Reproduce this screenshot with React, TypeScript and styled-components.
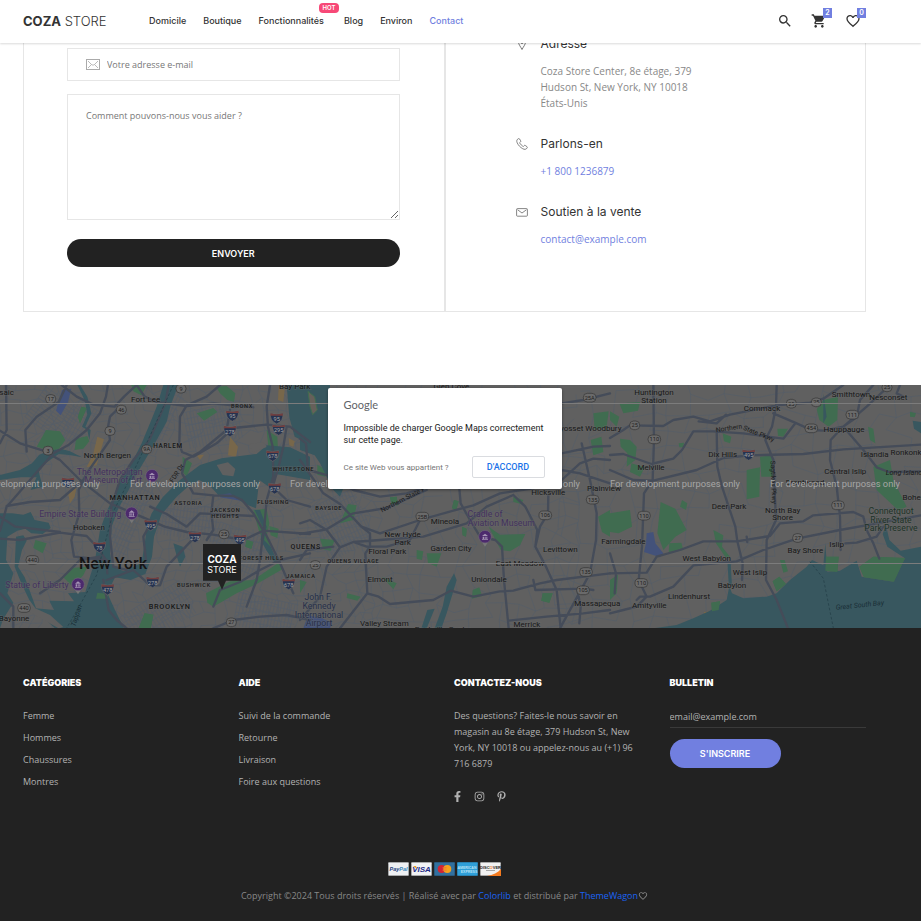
import React from "react";
import styled, { createGlobalStyle, css } from "styled-components";
import { MdFavoriteBorder, MdSearch, MdShoppingCart } from "react-icons/md";
import { FaFacebookF, FaInstagram, FaPinterestP } from "react-icons/fa";

const accent = "#717fe0";
const body = `"Open Sans", sans-serif`;
const display = `Inter, "Open Sans", sans-serif`;

const GlobalStyle = createGlobalStyle`
  *, *::before, *::after { box-sizing: border-box; }
  body { margin: 0; background: #fff; font-family: ${body}; font-size: 9px; color: #333; }
  a { color: inherit; text-decoration: none; }
  button, input, textarea { font-family: inherit; font-size: inherit; }
  h4, p, ul { margin: 0; padding: 0; }
  ul { list-style: none; }
`;

const gutter = css`padding-left: 23px; padding-right: 55px;`;

/* ---------- header ---------- */

const Header = styled.header`
  ${gutter}
  position: sticky;
  top: 0;
  z-index: 5;
  display: flex;
  align-items: center;
  justify-content: space-between;
  height: 43px;
  padding-bottom: 2px;
  background: #fff;
  box-shadow: 0 1px 2px rgba(0, 0, 0, 0.15);
`;

const Brand = styled.div`
  display: flex;
  align-items: center;
`;

const Logo = styled.a`
  width: 126px;
  font-family: ${display};
  font-size: 13px;
  line-height: 20px;
  font-weight: 300;
  white-space: nowrap;
  b { font-weight: 700; }
`;

const NavList = styled.ul`
  display: flex;
  gap: 17px;
`;

const NavLink = styled.a<{ $active?: boolean }>`
  position: relative;
  display: block;
  font-family: ${display};
  line-height: 16px;
  font-weight: 500;
  color: ${(p) => (p.$active ? accent : "#333")};
`;

const WideNavLink = styled(NavLink)`
  padding-right: 3px;
`;

const HotTag = styled.span`
  position: absolute;
  right: -12px;
  top: -10px;
  width: 20px;
  border-radius: 4px;
  background: #f74877;
  color: #fff;
  font-size: 6px;
  line-height: 10px;
  font-weight: 600;
  text-align: center;
`;

const Tools = styled.div`
  display: flex;
  gap: 18px;
  margin-right: 5px;
`;

const ToolButton = styled.button`
  position: relative;
  display: flex;
  padding: 0;
  border: 0;
  background: none;
  color: #333;
`;

const Count = styled.span`
  position: absolute;
  right: -5px;
  top: -5px;
  width: 9px;
  background: ${accent};
  color: #fff;
  font-family: ${display};
  font-size: 7px;
  line-height: 10px;
  font-weight: 600;
  text-align: center;
`;

/* ---------- contact ---------- */

const Contact = styled.section`
  ${gutter}
  display: grid;
  grid-template-columns: 1fr 1fr;
  margin-top: -10px;
  margin-bottom: 73px;
`;

const FormPanel = styled.form`
  display: flex;
  flex-direction: column;
  padding: 14px 44px 44px 43px;
  border: 1px solid #e6e6e6;
`;

const InfoPanel = styled.address`
  display: flex;
  flex-direction: column;
  gap: 23px;
  padding: 0 60px 44px 70px;
  border: 1px solid #e6e6e6;
  font-style: normal;
`;

const Field = styled.label`
  display: flex;
  align-items: center;
  gap: 7px;
  height: 33px;
  margin-bottom: 13px;
  padding: 0 18px;
  border: 1px solid #e6e6e6;
`;

const FieldInput = styled.input`
  flex: 1;
  min-width: 0;
  padding: 0;
  border: 0;
  outline: 0;
  background: none;
  color: #555;
  &::placeholder { color: #777; opacity: 1; }
`;

const Message = styled.textarea`
  height: 126px;
  margin-bottom: 19px;
  padding: 13px 18px;
  border: 1px solid #e6e6e6;
  outline: 0;
  line-height: 16px;
  resize: both;
  &::placeholder { color: #777; opacity: 1; }
`;

const Pill = styled.button<{ $tone: "dark" | "accent" }>`
  height: ${(p) => (p.$tone === "dark" ? "28px" : "29px")};
  width: ${(p) => (p.$tone === "dark" ? "100%" : "111px")};
  padding: 0;
  border: 0;
  border-radius: 15px;
  background: ${(p) => (p.$tone === "dark" ? "#222" : accent)};
  color: #fff;
  font-family: ${display};
  font-weight: 600;
`;

const InfoItem = styled.div`
  display: grid;
  grid-template-columns: 12px 1fr;
  column-gap: 13px;
  row-gap: 9px;
  align-items: center;
`;

const InfoTitle = styled.span`
  font-family: ${display};
  font-size: 12px;
  line-height: 20px;
`;

const InfoText = styled.div`
  grid-column: 2;
  font-size: 10px;
  line-height: 16px;
  color: #888;
  a { color: ${accent}; }
`;

/* ---------- map ---------- */

const MapFrame = styled.section`
  ${gutter}
  position: relative;
  display: flex;
  justify-content: center;
  align-items: flex-start;
  height: 243px;
  padding-top: 3px;
  overflow: hidden;
  background: #606060;
`;

const MapCanvas = styled.svg`
  position: absolute;
  inset: 0;
  width: 100%;
  height: 100%;
  font-family: Roboto, sans-serif;
`;

const Dialog = styled.div`
  position: relative;
  width: 234px;
  padding: 8px 17px 11px 16px;
  border-radius: 2px;
  background: #fff;
  box-shadow: 0 1px 3px rgba(0, 0, 0, 0.4);
  font-family: Roboto, sans-serif;
`;

const GoogleWord = styled.div`
  font-family: Lato, sans-serif;
  font-size: 11px;
  line-height: 18px;
  color: #5f6368;
`;

const DialogText = styled.p`
  margin: 8px 0 10px;
  font-size: 9px;
  line-height: 12px;
  color: #212121;
`;

const DialogRow = styled.div`
  display: flex;
  align-items: center;
  justify-content: space-between;
  font-size: 8px;
  a { color: #757575; }
`;

const AcceptButton = styled.button`
  width: 73px;
  height: 22px;
  padding: 0;
  border: 1px solid #dadce0;
  border-radius: 2px;
  background: #fff;
  color: #1a73e8;
  font-size: 9px;
  font-weight: 500;
`;

/* ---------- footer ---------- */

const Footer = styled.footer`
  ${gutter}
  padding-top: 47px;
  padding-bottom: 17px;
  background: #222;
  color: #b2b2b2;
`;

const FooterGrid = styled.div`
  display: grid;
  grid-template-columns: repeat(4, 1fr);
  column-gap: 19px;
  min-height: 187px;
`;

const FooterTitle = styled.h4`
  margin-bottom: 14px;
  font-family: ${display};
  font-size: 9px;
  line-height: 16px;
  font-weight: 900;
  color: #fff;
`;

const LinkList = styled.ul`
  line-height: 22px;
`;

const FooterText = styled.p`
  padding-top: 3px;
  line-height: 16px;
`;

const Socials = styled.div`
  display: flex;
  gap: 11px;
  margin: 19px 0 0 -2px;
  font-size: 11px;
  a { display: flex; }
`;

const Newsletter = styled.form`
  input {
    display: block;
    width: 100%;
    height: 23px;
    margin-bottom: 11px;
    padding: 0;
    border: 0;
    border-bottom: 1px solid #3a3a3a;
    outline: 0;
    background: none;
    color: #b2b2b2;
  }
  input::placeholder { color: #b2b2b2; opacity: 1; }
`;

const Cards = styled.div`
  display: flex;
  justify-content: center;
  gap: 2px;
  margin-bottom: 12px;
  svg { display: block; }
`;

const Copyright = styled.p`
  display: flex;
  justify-content: center;
  align-items: center;
  line-height: 16px;
  color: #888;
  white-space: pre;
  a { color: #1a62f5; }
`;

/* ---------- small drawings ---------- */

const FieldMail = () => (
  <svg width="14" height="11" viewBox="0 0 14 11" fill="none" stroke="#aaa">
    <rect x=".5" y=".5" width="13" height="10" />
    <path d="M2 2l4 4h2l4-4M2 9l3-3M12 9L9 6" strokeWidth=".8" />
  </svg>
);

const PinIcon = () => (
  <svg width="12" height="12" viewBox="0 0 12 12" fill="none" stroke="#555" strokeWidth=".8">
    <path d="M6 11.5C4.500 8.500 2.500 6.500 2.500 4a3.500 3.500 0 0 1 7 0c0 2.500-2 4.500-3.500 7.500z" />
    <circle cx="6" cy="4" r="1.500" />
  </svg>
);

const PhoneIcon = () => (
  <svg width="12" height="12" viewBox="0 0 12 12" fill="none" stroke="#666" strokeWidth=".8">
    <path d="M2.500.6C.8 1.400.3 2.800 1.200 4.800c1.100 2.500 3 4.500 5.500 5.900 1.800 1 3.400.9 4.500-.8.4-.6.200-.9-.3-1.300L9.300 7.500c-.5-.3-.8-.3-1.200.200l-.7.8C6 7.900 4.200 6.100 3.600 4.700l.9-.8c.4-.4.400-.7.100-1.200L3.500.9C3.200.5 2.900.4 2.500.6z" />
  </svg>
);

const EnvelopeIcon = () => (
  <svg width="12" height="12" viewBox="0 0 12 12" fill="none" stroke="#666" strokeWidth=".8">
    <rect x=".6" y="2.600" width="10.800" height="7.600" rx=".8" />
    <path d="M1.500 3.700L6 7l4.500-3.300" />
  </svg>
);

const CardFace = ({ tint, border = "#888", children }: { tint: string; border?: string; children: React.ReactNode }) => (
  <svg width="21" height="14" viewBox="0 0 21 14" fontFamily="Liberation Sans, sans-serif" textAnchor="middle">
    <rect x=".25" y=".25" width="20.500" height="13.500" rx="1" fill={tint} stroke={border} strokeWidth=".5" />
    {children}
  </svg>
);

const PaymentCards = () => (
  <Cards>
    <CardFace tint="#eef0f3">
      <text x="10.500" y="9" fontSize="5.500" fontWeight="700" fontStyle="italic" fill="#24417d">Pay<tspan fill="#3c87b8">Pal</tspan></text>
    </CardFace>
    <CardFace tint="#f1f2f4">
      <text x="10.500" y="9.800" fontSize="8" fontWeight="700" fontStyle="italic" fill="#1c2a86">VISA</text>
      <path d="M2 4h3l1 3z" fill="#f0a12a" />
    </CardFace>
    <CardFace tint="#31709f" border="#2a5c85">
      <circle cx="7.700" cy="7" r="4" fill="#d32434" />
      <circle cx="13.300" cy="7" r="4" fill="#f6a11d" />
      <path d="M8.500 5.500h4M8.500 7h4M8.500 8.500h4" stroke="#e8703a" strokeWidth=".6" />
    </CardFace>
    <CardFace tint="#2f9fd8" border="#2787bd">
      <text x="10" y="6.500" fontSize="3.500" fontWeight="700" fill="#b9e2f5">AMERICAN</text>
      <text x="12" y="10.500" fontSize="3.500" fontWeight="700" fill="#b9e2f5">EXPRESS</text>
    </CardFace>
    <CardFace tint="#f1f1f1">
      <path d="M21 7v7H7c6-1 11-3.500 14-7z" fill="#f47b20" />
      <text x="10.500" y="6.500" fontSize="4" fontWeight="700" fill="#222">DISC<tspan fill="#f47b20">O</tspan>VER</text>
      <path d="M6 8.500h9" stroke="#888" strokeWidth=".7" />
    </CardFace>
  </Cards>
);

/* ---------- map data: one unit is a third of a pixel ---------- */

const W = 2763;
const H = 729;

const buildStreets = () => {
  let seed = 11;
  const rnd = () => {
    seed = (seed * 16807) % 2147483647;
    return seed / 2147483647;
  };
  const parts: string[] = [];
  const region = (x0: number, x1: number, step: number, slant: number) => {
    const cols = Math.ceil((x1 - x0) / step);
    const rows = Math.ceil(H / step) + 1;
    const pts = Array.from({ length: rows + 1 }, (_, r) =>
      Array.from({ length: cols + 1 }, (_, c) => [
        Math.round(x0 + c * step + (rnd() - 0.5) * step * 0.7 + (r % 6) * slant),
        Math.round(r * step - step / 2 + (rnd() - 0.5) * step * 0.7),
      ])
    );
    for (let r = 0; r <= rows; r++)
      for (let c = 0; c <= cols; c++) {
        const [x, y] = pts[r][c];
        if (c < cols && rnd() < 0.75) parts.push(`M${x} ${y}L${pts[r][c + 1].join(" ")}`);
        if (r < rows && rnd() < 0.75) parts.push(`M${x} ${y}L${pts[r + 1][c].join(" ")}`);
      }
  };
  region(-20, 1100, 32, 5);
  region(1080, 1700, 46, 4);
  region(1680, 2780, 56, -4);
  return parts.join("");
};

const streets = buildStreets();

const blockGrids: [number, number, number, number, number][] = [
  [395, 395, 80, 260, 24],
  [500, 110, 50, 210, 24],
  [470, 690, 210, 110, -32],
  [720, 500, 160, 130, 20],
  [570, 410, 180, 100, 8],
  [640, 120, 170, 110, -12],
  [150, 90, 120, 130, -55],
  [240, 130, 70, 150, 30],
  [800, 690, 180, 100, 12],
  [1020, 420, 150, 170, -24],
];

const west = {
  water: [
    "M490 15H535L512 75 500 125 470 180 440 232 405 290 385 332 355 385 335 440 330 520 338 560 372 574 425 548 436 478 440 440 455 400 488 352 540 300 600 255 665 235 770 222 800 196 870 202 930 230V300L862 288 828 282 806 320 778 300 768 385 735 372 690 340 655 345 630 318 598 300 562 322 530 350 484 404 462 470 456 530 436 582 392 600 345 592 322 640 345 690 372 745H165L98 684 162 690 148 662 222 664 204 640 256 636 270 590 284 545 292 500 300 450 318 400 345 340 362 290 400 240 425 190 450 130 470 80z",
    "M860 15H930V192L884 170 868 112z",
    "M0 285L60 270 96 250 118 224 150 212 182 206 210 214 246 232 214 226 176 222 136 250 116 274 128 320 92 330 110 292 60 292 0 300z",
    "M0 400L36 400 70 404 92 396 104 420 146 428 152 444 128 462 94 460 76 446 52 452 22 470 18 540 40 580 22 640 40 668 8 720 0 745z",
    "M48 470L70 466 80 482 66 510 54 560 74 592 92 640 110 690 88 660 64 610 44 560z",
    "M240 15L262 50 274 100 256 140 272 150 268 180 262 150 246 140 262 104 254 60 232 15z",
    "M780 390L800 440 792 480 812 500 836 552 824 548 800 512 782 480 788 440 764 390z",
    "M520 490L548 500 556 530 540 560 530 528z",
  ],
  parks: [
    "M138 150L180 154 196 180 176 208 146 212 110 200z",
    "M228 176L262 168 268 184 250 206 224 210z",
    "M212 564L262 560 250 586 216 618 190 592z",
    "M648 20L680 18 706 40 702 66 682 60 660 40z",
    "M800 150L832 170 834 210 806 210z",
    "M618 640L690 604 760 600 836 548 850 566 770 612 710 640 640 680 622 668z",
    "M548 230L576 250 560 290 548 276z",
    "M760 390L800 386 808 430 800 470 820 520 800 510 776 450z",
    "M808 438L836 446 832 474 812 466z",
    "M106 480L140 490 128 520 100 504z",
    "M394 15L440 15 424 46 400 34z",
    "M590 100L640 84 652 96 612 122z",
    "M434 700L460 704 452 745 416 745z",
    "M292 638L326 642 320 656 288 656z",
    "M740 480L760 486 754 506 736 500z",
    "M244 80L260 84 240 130 234 110z",
  ],
  sand: [
    "M292 170L312 178 290 256 260 262 280 220z",
    "M690 170L714 200 708 230 684 226z",
    "M204 336L230 322 224 350 210 370z",
    "M836 20L854 30 850 66 834 60z",
    "M866 174L884 184 880 200 868 196z",
    "M590 226L612 224 600 240z",
  ],
  blue: ["M186 30L214 26 204 66 182 106 168 92z", "M660 326L726 318 748 356 722 362 660 352z"],
  roads: [
    "M0 152L60 190 130 212 180 240 240 300 330 370 410 404",
    "M200 15L176 66 110 110 76 150 80 215",
    "M185 15L230 50 280 74 344 80 372 50 410 15",
    "M326 0L318 50 300 100 260 150 204 196 160 220 90 300 20 380 0 452",
    "M410 15L434 50 470 66 560 78 640 70 720 78 760 82",
    "M350 90L330 110 324 140 330 180 260 280 236 330 238 400 214 480 222 530 320 540 322 580",
    "M506 15L496 70 448 180 400 240 360 300 334 380 330 470 340 560 380 570",
    "M538 190L540 110 560 76 620 50 660 15",
    "M810 15L800 80 804 140 818 200 820 290 800 360 792 452 836 540 880 640",
    "M690 90L680 150 600 216 556 240 546 280 580 340 640 346 634 400 640 450 620 480",
    "M538 190L546 216 580 230 650 190 700 144 800 134 870 140 930 186",
    "M640 346L700 348 726 360 760 400 790 452",
    "M410 404L494 440 560 456 640 464 730 480 790 452 930 462",
    "M450 380L500 402 560 440 600 400 760 408",
    "M450 434L430 470 438 540 432 560",
    "M0 476L60 480 180 458 260 468 290 500 318 540",
    "M18 15L20 150 0 190",
    "M0 410L46 440 180 456",
    "M20 378L90 366 180 360 250 300",
    "M320 600L400 570 450 616 480 616 500 560 580 476",
    "M310 600L326 690 350 720 380 745",
    "M120 640L180 600 240 540 300 530",
    "M40 745L40 680 0 640",
    "M640 680L660 630 720 606 780 570 840 540 930 520",
    "M640 745L700 720 780 710 860 705 930 720",
    "M790 452L780 540 770 600 740 680",
    "M860 140L850 200 836 260 818 320 860 360 930 380",
  ],
};

const central = {
  water: [
    "M0 15H90V325H130L120 350 100 330 60 250 44 226 0 210z",
    "M440 620L462 580 470 600 440 700 424 745 404 745 428 680z",
    "M382 690L404 686 380 745H364z",
  ],
  parks: [
    "M880 100L926 94 920 140 884 150z",
    "M872 180L904 170 910 216 880 226z",
    "M894 410L930 390V470L906 456z",
    "M566 440L600 464 676 462 660 496 630 514 602 510z",
    "M144 372L170 376 160 420 120 430z",
    "M142 640L182 650 172 662 140 654z",
    "M246 590L290 610 280 628z",
    "M518 630L538 622 546 648 516 656z",
    "M380 520L424 520 410 560 384 548z",
    "M350 510L370 514 366 540 350 536z",
    "M60 476L104 480 92 512 70 508z",
    "M640 350L670 360 664 372 640 366z",
    "M52 254L80 270 76 290 52 284z",
    "M0 600L20 606 0 640z",
    "M270 352L290 350 294 376 276 374z",
    "M486 440L500 446 498 470 488 466z",
    "M728 640L758 640 748 668 724 662z",
    "M462 360L476 364 468 392 456 384z",
  ],
  sand: ["M24 34L44 50 52 90 38 104 30 80z"],
  blue: ["M24 706L64 714 96 728 90 745H10z"],
  roads: [
    "M0 176L18 190 24 270 84 286 160 330 240 350 320 340 370 325",
    "M0 240L70 340 120 372 184 440 240 460 360 420 460 392 520 376 600 340 700 325",
    "M0 462L80 448 160 400 260 384 380 330",
    "M0 430L30 420 80 450 120 502 160 486 240 480 370 470 500 430 560 380 640 345",
    "M184 440L210 460 210 500 196 520 202 640 120 745",
    "M202 640L236 650 270 672 400 660 452 632 520 650 600 634 640 632 720 610 770 600 930 580",
    "M478 325L482 370 510 420 540 470 586 480 606 500 612 600 626 745",
    "M640 345L676 380 712 450 706 500 738 560 770 630 782 745",
    "M745 345L744 400 720 440 706 500",
    "M845 190L870 300 890 400 888 480 870 580 780 745",
    "M785 220L880 200 930 198",
    "M785 300L840 250 880 236 930 240",
    "M785 270L840 280 930 310",
    "M785 70L850 60 930 40",
    "M120 502L80 560 60 650 0 720",
    "M700 600L706 630 850 626 880 630",
    "M626 722L740 710 850 700 930 690",
    "M832 630L842 680 838 730",
    "M160 486L200 500 260 500 330 480 360 420",
    "M100 500L20 510 0 540",
  ],
};

const east = {
  water: [
    "M130 745L200 735 250 715 300 692 350 660 358 618 366 640 400 655 470 650 500 640 540 600 590 560 606 540 640 556 646 490 652 575 690 572 740 542 755 590 850 605 885 535 832 500 818 462 828 436 838 480 872 512 933 500V745z",
    "M352 540L362 550 366 620 356 610z",
    "M908 122L933 126V160L912 146z",
    "M640 40L650 110 640 130z",
  ],
  parks: [
    "M620 88L640 60 684 50 682 120 656 140 628 120z",
    "M450 230L486 226 488 290 454 290z",
    "M410 270L450 262 448 350 410 358z",
    "M790 260L840 240 850 300 890 380 866 392 800 330z",
    "M152 366L196 386 230 450 196 470 160 510 142 460z",
    "M178 490L214 488 220 510 176 520z",
    "M0 400L60 390 66 440 26 460 0 456z",
    "M30 176L60 180 80 200 76 240 50 260 52 220 32 200z",
    "M64 250L104 262 90 290 60 276z",
    "M502 146L534 146 520 170 504 168z",
    "M28 70L90 66 84 92 40 100z",
    "M0 94L28 110 20 140 0 120z",
    "M774 140L790 146 796 190 780 180z",
    "M310 450L340 466 336 500 360 530 348 534 318 490z",
    "M510 540L524 540 534 574 520 578z",
    "M0 600L24 584 20 640 0 660z",
    "M338 160L364 170 360 190 342 184z",
    "M900 95L918 100 914 112 900 110z",
    "M216 360L232 370 228 390 210 380z",
    "M206 190L222 188 220 202 208 202z",
    "M304 668L330 664 326 690 306 694z",
    "M648 530L686 530 682 576 646 572z",
    "M488 604L508 590 528 612 500 634z",
    "M748 560L790 530 885 534 852 605 762 592z",
  ],
  sand: ["M282 696L304 694 300 706 282 708z"],
  blue: ["M110 460L130 456 136 490 160 520 150 532 102 516 108 490z"],
  roads: [
    "M130 15L132 180 128 300 102 340 96 500 86 600 110 650",
    "M0 174L40 150 60 136 160 138 190 120 250 110 300 124 360 104 500 76 600 68 640 56 700 15",
    "M266 124L320 130 348 104",
    "M500 15L498 80 486 140 466 180 490 240 498 420 470 480 468 600 500 660 534 745",
    "M320 150L322 260 336 320 376 440 382 484 398 550 396 600",
    "M0 225L40 222 90 240 124 252 190 236 216 210 250 154 310 154 400 160 520 176 556 130",
    "M0 270L70 300 130 302 260 270 340 234 420 226 580 222 700 208 933 194",
    "M490 100L560 130 604 150 640 152 700 140 770 80 840 15",
    "M700 140L740 112 750 60 790 15",
    "M700 140L760 210 800 262 836 276 933 274",
    "M690 150L662 180 660 240 680 320 690 410 692 510",
    "M0 580L110 578 140 530 210 510 280 484 380 484 480 468 510 430 580 424 610 406 730 396 760 410 770 450 790 490 808 536",
    "M80 660L90 650 120 650 190 620 250 556 380 544 460 510 560 476 690 450 780 434 933 406",
    "M706 490L740 488 800 470 820 440",
    "M0 700L40 690 80 680 110 650",
    "M0 520L18 580 14 640",
    "M870 15L860 40 880 50",
    "M410 470L412 486",
  ],
};

type LabelTuple = [number, number, string, number?];
const landLabels: LabelTuple[] = [
  [20, 20, "saic"], [437, 42, "Fort Lee"], [884, 4, "Bay Park"], [726, 62, "BRONX", 17], [504, 182, "HARLEM", 19],
  [322, 209, "North Bergen"], [405, 338, "MANHATTAN", 22], [565, 353, "ASTORIA", 17], [676, 375, "JACKSON", 17],
  [676, 393, "HEIGHTS", 17], [820, 351, "FLUSHING", 17], [880, 253, "WHITESTONE", 17], [267, 427, "Hoboken"],
  [784, 519, "FOREST HILLS", 17], [917, 484, "QUEENS", 21], [903, 573, "JAMAICA", 17], [582, 600, "BUSHWICK", 17],
  [509, 664, "BROOKLYN", 22], [42, 698, "Bayonne"], [1354, 2, "Glen Cove"], [986, 368, "BAYSIDE", 17],
  [1335, 408, "Mineola"], [1208, 447, "New Hyde"], [1208, 470, "Park"], [1353, 488, "Garden City"],
  [1162, 499, "Floral Park"], [1060, 529, "QUEENS VILLAGE", 16], [1140, 582, "Elmont"], [1467, 583, "Uniondale"],
  [1560, 535, "East Meadow"], [1681, 491, "Levittown"], [1645, 321, "Hicksville"], [1765, 130, "Syosset Woodbury"],
  [1153, 713, "Valley Stream"], [1330, 731, "Rockville Centre"], [1581, 718, "Merrick"], [1792, 655, "Massapequa"],
  [1812, 310, "Plainview"], [1870, 467, "Farmingdale"], [1962, 21, "Huntington"], [1962, 44, "Station"],
  [2286, 70, "Commack"], [2553, 28, "Smithtown"], [2665, 36, "Nesconset"], [2532, 132, "Hauppauge"],
  [2168, 206, "Dix Hills"], [1953, 247, "Melville"], [2624, 208, "Islandia"], [2742, 201, "Ronkonkoma"],
  [2536, 258, "Central Islip"], [2187, 362, "Deer Park"], [2348, 375, "North Bay"], [2348, 397, "Shore"],
  [2415, 290, "Brentwood"], [2510, 478, "Islip"], [2416, 495, "Bay Shore"], [2120, 520, "West Babylon"],
  [2250, 562, "West Islip"], [2196, 600, "Babylon"], [2067, 632, "Lindenhurst"], [1948, 660, "Amityville"],
  [2755, 335, "Bohemia"],
];

const placeLabels: LabelTuple[] = [
  [329, 261, "The Metropolitan", 26], [340, 286, "Museum of Art", 26], [241, 387, "Empire State Building", 26],
  [111, 599, "Statue of Liberty", 26], [1455, 387, "Cradle of", 26], [1504, 413, "Aviation Museum", 26],
];
const airportLabels: LabelTuple[] = [[955, 636, "John F."], [957, 662, "Kennedy"], [957, 689, "International"], [957, 715, "Airport"]];
const parkLabels: LabelTuple[] = [[2673, 378, "Connetquot"], [2673, 404, "River State"], [2673, 430, "Park Preserve"]];

const routes: [number, number, string][] = [
  [152, 42, "17"], [364, 74, "46"], [330, 138, "9"], [144, 197, "3"], [440, 193, "9A"], [543, 11, "9"], [672, 448, "25"],
  [97, 525, "440"], [72, 669, "440"], [694, 712, "27"], [946, 540, "25"], [1267, 395, "25B"], [1636, 391, "106"],
  [1778, 344, "135"], [1769, 38, "25A"], [1758, 561, "135"], [1749, 616, "105"], [1904, 121, "25"], [1963, 163, "110"],
  [1932, 392, "110"], [1924, 594, "110"], [2374, 56, "25"], [2449, 52, "25"], [2434, 130, "454"], [2557, 89, "111"],
  [2514, 361, "111"], [2393, 459, "27"], [2661, 7, "25"],
];

const interstates: [number, number, string][] = [
  [697, 91, "95"], [690, 137, "278"], [830, 99, "95"], [836, 133, "295"], [818, 211, "678"], [824, 309, "678"],
  [452, 419, "495"], [585, 455, "278"], [720, 463, "495"], [298, 485, "78"], [323, 612, "478"], [458, 590, "278"],
  [866, 596, "678"], [204, 292, "495"], [2246, 208, "495"],
];

const landmarks: [number, number][] = [[456, 272], [395, 385], [234, 598], [1455, 455]];

const Labels = ({ items, fill, size = 24 }: { items: LabelTuple[]; fill: string; size?: number }) => (
  <g fill={fill} stroke="#6a6a6a" strokeOpacity=".4" strokeWidth="4" paintOrder="stroke">
    {items.map(([x, y, text, own]) => (
      <text
        key={text}
        x={x}
        y={y}
        dy=".36em"
        fontSize={own ?? size}
        fontWeight={own && own < 24 ? 500 : 400}
        letterSpacing={own && own < 24 ? 2 : 0}
      >
        {text}
      </text>
    ))}
  </g>
);

const Tile = ({ x, data }: { x: number; data: typeof west }) => (
  <g transform={`translate(${x} -15)`}>
    <path d={data.parks.join("")} fill="#406c50" />
    <path d={data.sand.join("")} fill="#78674a" />
    <path d={data.blue.join("")} fill="#43527a" />
    <path d={data.water.join("")} fill="#38575f" />
    <path d={data.parks.slice(-4).join("")} fill="#406c50" />
  </g>
);

const Roads = ({ x, data }: { x: number; data: typeof west }) => (
  <path
    transform={`translate(${x} -15)`}
    d={data.roads.join("")}
    fill="none"
    stroke="#454c59"
    strokeWidth="7"
    strokeLinejoin="round"
    strokeLinecap="round"
  />
);

const RegionMap = () => (
  <MapCanvas viewBox={`0 0 ${W} ${H}`} preserveAspectRatio="xMidYMid slice" textAnchor="middle" aria-label="Carte">
    <rect width={W} height={H} fill="#606060" />
    <path d={streets} fill="none" stroke="#555d68" strokeWidth="2" />
    {blockGrids.map(([x, y, w, h, angle]) => (
      <g key={`${x}-${y}`} transform={`rotate(${angle} ${x} ${y - 15})`} stroke="#555d68" strokeWidth="2">
        {Array.from({ length: Math.floor(w / 10) }, (_, i) => (
          <path key={`v${i}`} d={`M${x - w / 2 + i * 10} ${y - h / 2}v${h}`} />
        ))}
        {Array.from({ length: Math.floor(h / 20) }, (_, i) => (
          <path key={`h${i}`} d={`M${x - w / 2} ${y - h / 2 + i * 20}h${w}`} />
        ))}
      </g>
    ))}
    <Tile x={0} data={west} />
    <Tile x={900} data={central} />
    <Tile x={1830} data={east} />
    <path d="M924 19L944 35 952 75 938 89 930 65z" fill="#66605a" stroke="#406c50" strokeWidth="3" />
    <g fill="#606060">
      <path d="M650 240L684 232 706 252 700 274 668 270z" />
      <path d="M745 178L790 172 800 186 760 202z" />
      <path d="M84 660L150 690 190 726 176 730 90 682z" />
    </g>
    <Roads x={0} data={west} />
    <Roads x={900} data={central} />
    <Roads x={1830} data={east} />
    <path
      d="M520 0L410 240 340 380 308 500 290 570 240 660 200 729M2430 530L2470 580 2500 729"
      fill="none"
      stroke="#29454e"
      strokeWidth="3"
      strokeDasharray="8 6"
    />
    {interstates.map(([x, y, n]) => (
      <g key={`${x}-${y}`} transform={`translate(${x} ${y})`}>
        <path d="M-18-14Q0-8 18-14Q22 8 0 18Q-22 8-18-14z" fill="#263350" stroke="#6a6a6a" strokeWidth="2" />
        <path d="M-18-14Q0-8 18-14L19-7H-19z" fill="#713f3f" />
        <text y="9" fontSize="17" fill="#a3a3a3">{n}</text>
      </g>
    ))}
    {routes.map(([x, y, n]) => (
      <g key={`${x}-${y}`} transform={`translate(${x} ${y})`}>
        <rect x={n.length > 2 ? -19 : -15} y="-13" width={n.length > 2 ? 38 : 30} height="26" rx="12" fill="#6a6a6a" stroke="#333" strokeWidth="2" />
        <text y="6" fontSize="17" fill="#1f1f1f">{n}</text>
      </g>
    ))}
    <Labels items={landLabels} fill="#181818" />
    <Labels items={placeLabels} fill="#43325f" />
    <Labels items={airportLabels} fill="#27304a" size={26} />
    <Labels items={parkLabels} fill="#1e3328" size={26} />
    <text x="339" y="553" fontSize="48" fontWeight="500" fill="#151515">New York</text>
    <g fill="#1b1b1b" fontSize="20">
      <text transform="translate(1212 349) rotate(-27)">Northern State P</text>
      <text transform="translate(2188 136) rotate(-8)">Northern</text>
      <text transform="translate(2274 152) rotate(22)">State Pkwy</text>
      <text transform="translate(2314 292) rotate(88)">Sagtikos Pkwy</text>
      <text transform="translate(536 268) rotate(-57)">FDR Dr</text>
      <text x="2712" y="270" fontSize="22" fontStyle="italic">Long Island</text>
    </g>
    <g fill="#182e36" fontStyle="italic">
      <text transform="translate(2580 667) rotate(-6)" fontSize="21">Great South Bay</text>
      <text transform="translate(236 694) rotate(-72)" fontSize="21">Tappan</text>
    </g>
    {landmarks.map(([x, y]) => (
      <g key={x} transform={`translate(${x} ${y})`}>
        <path d="M-10 15L0 30 10 15z" fill="#777" />
        <circle r="19" fill="#4c2a6d" stroke="#6f6877" strokeWidth="2" />
        <path d="M-9-2L0-9 9-2zM-7 0H-3V7H-7zM-1 0H2V7H-1zM4 0H7V7H4zM-9 8H9V10H-9z" fill="#a595b5" />
      </g>
    ))}
    <path d="M0 55.500H2763M0 535.500H2763" stroke="#7c7c7c" strokeWidth="3" />
    <g fontSize="28" fill="#a6a6a6">
      {[105, 585, 1065, 1545, 2025, 2505].map((x) => (
        <text key={x} x={x} y="305">For development purposes only</text>
      ))}
    </g>
    <g fontFamily={display} fill="#fff">
      <path d="M609 477H723V587H678L666 614 654 587H609z" fill="#222" />
      <text x="666" y="534" fontSize="30" fontWeight="700">COZA</text>
      <text x="666" y="563" fontSize="27" fontWeight="400">STORE</text>
    </g>
  </MapCanvas>
);

/* ---------- page ---------- */

const navItems = ["Domicile", "Boutique", "Fonctionnalités", "Blog", "Environ", "Contact"];
const footerLinks = [
  { title: "CATÉGORIES", items: ["Femme", "Hommes", "Chaussures", "Montres"] },
  { title: "AIDE", items: ["Suivi de la commande", "Retourne", "Livraison", "Foire aux questions"] },
];

export default function App() {
  return (
    <>
      <GlobalStyle />
      <Header>
        <Brand>
          <Logo href="#"><b>COZA</b> STORE</Logo>
          <nav>
            <NavList>
              {navItems.map((item) => {
                const hot = item === "Fonctionnalités";
                const Link = hot ? WideNavLink : NavLink;
                return (
                  <li key={item}>
                    <Link href="#" $active={item === "Contact"}>
                      {item}
                      {hot && <HotTag>HOT</HotTag>}
                    </Link>
                  </li>
                );
              })}
            </NavList>
          </nav>
        </Brand>
        <Tools>
          <ToolButton type="button" aria-label="Rechercher"><MdSearch size={16} /></ToolButton>
          <ToolButton type="button" aria-label="Panier"><MdShoppingCart size={16} /><Count>2</Count></ToolButton>
          <ToolButton type="button" aria-label="Favoris"><MdFavoriteBorder size={16} /><Count>0</Count></ToolButton>
        </Tools>
      </Header>

      <main>
        <Contact>
          <FormPanel>
            <Field>
              <FieldMail />
              <FieldInput type="email" placeholder="Votre adresse e-mail" aria-label="Votre adresse e-mail" />
            </Field>
            <Message placeholder="Comment pouvons-nous vous aider ?" aria-label="Comment pouvons-nous vous aider ?" />
            <Pill type="button" $tone="dark">ENVOYER</Pill>
          </FormPanel>
          <InfoPanel>
            <InfoItem>
              <PinIcon />
              <InfoTitle>Adresse</InfoTitle>
              <InfoText>
                Coza Store Center, 8e étage, 379<br />
                Hudson St, New York, NY 10018<br />
                États-Unis
              </InfoText>
            </InfoItem>
            <InfoItem>
              <PhoneIcon />
              <InfoTitle>Parlons-en</InfoTitle>
              <InfoText><a href="tel:+18001236879">+1 800 1236879</a></InfoText>
            </InfoItem>
            <InfoItem>
              <EnvelopeIcon />
              <InfoTitle>Soutien à la vente</InfoTitle>
              <InfoText><a href="mailto:contact@example.com">contact@example.com</a></InfoText>
            </InfoItem>
          </InfoPanel>
        </Contact>

        <MapFrame>
          <RegionMap />
          <Dialog role="dialog" aria-label="Google">
            <GoogleWord>Google</GoogleWord>
            <DialogText>Impossible de charger Google Maps correctement sur cette page.</DialogText>
            <DialogRow>
              <a href="#">Ce site Web vous appartient ?</a>
              <AcceptButton type="button">D'ACCORD</AcceptButton>
            </DialogRow>
          </Dialog>
        </MapFrame>
      </main>

      <Footer>
        <FooterGrid>
          {footerLinks.map(({ title, items }) => (
            <div key={title}>
              <FooterTitle>{title}</FooterTitle>
              <LinkList>
                {items.map((item) => (
                  <li key={item}><a href="#">{item}</a></li>
                ))}
              </LinkList>
            </div>
          ))}
          <div>
            <FooterTitle>CONTACTEZ-NOUS</FooterTitle>
            <FooterText>
              Des questions? Faites-le nous savoir en<br />
              magasin au 8e étage, 379 Hudson St, New<br />
              York, NY 10018 ou appelez-nous au (+1) 96<br />
              716 6879
            </FooterText>
            <Socials>
              <a href="#" aria-label="Facebook"><FaFacebookF /></a>
              <a href="#" aria-label="Instagram"><FaInstagram /></a>
              <a href="#" aria-label="Pinterest"><FaPinterestP /></a>
            </Socials>
          </div>
          <div>
            <FooterTitle>BULLETIN</FooterTitle>
            <Newsletter>
              <input type="email" placeholder="email@example.com" aria-label="E-mail" />
              <Pill type="button" $tone="accent">S'INSCRIRE</Pill>
            </Newsletter>
          </div>
        </FooterGrid>
        <PaymentCards />
        <Copyright>
          Copyright ©2024 Tous droits réservés | Réalisé avec par <a href="#">Colorlib</a> et distribué par <a href="#">ThemeWagon</a>
          <MdFavoriteBorder size={10} />
        </Copyright>
      </Footer>
    </>
  );
}
